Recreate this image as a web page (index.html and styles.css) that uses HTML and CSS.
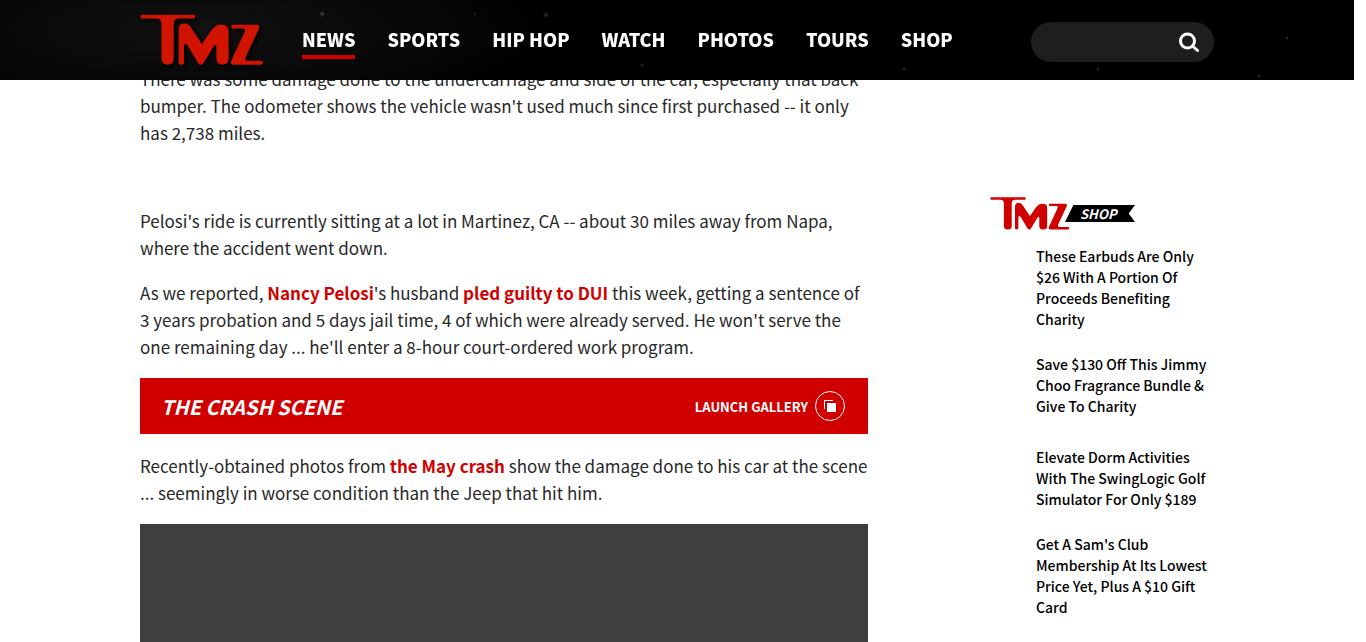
FILE: index.html
```html
<!DOCTYPE html>
<html lang="en">
<head>
<meta charset="utf-8">
<title>TMZ</title>
<link rel="stylesheet" href="styles.css">
</head>
<body>
<svg class="symbols" aria-hidden="true">
  <symbol id="tmz" viewBox="60 40 375 154">
    <path d="M64 41H224Q227 41 227 46.500Q227 52 224 52H180Q162 52 162 68V174Q162 192 143.500 192Q125 192 125 174V68Q125 52 108 52H64Q62 50 62 46.500Q62 42 64 41Z"/>
    <path d="M177 185V84Q177 67 195 67Q207 67 214 79L247 129L277 86Q290 71 302 71H312Q328 73 328 90V174Q328 192 309.500 192Q291 192 291 174V139Q291 126 283 136L252 187Q244 197 236 187L205 135Q193 120 193 139V185Q193 192 185 192Q177 192 177 185Z"/>
    <path d="M340 71H415Q424 73 420 82L379 170Q376 179 384 180H427Q432 182 432 186Q431 191 427 192H342Q332 190 336 180L377 91Q380 83 372 82H340Q336 81 336 76Q336 72 340 71Z"/>
  </symbol>
</svg>
<header class="header">
  <div class="header-inner">
    <a class="logo" href="#" aria-label="TMZ"><svg><use href="#tmz"/></svg></a>
    <nav class="nav">
      <a class="active" href="#">NEWS</a>
      <a href="#">SPORTS</a>
      <a href="#">HIP HOP</a>
      <a href="#">WATCH</a>
      <a href="#">PHOTOS</a>
      <a href="#">TOURS</a>
      <a href="#">SHOP</a>
    </nav>
    <form class="search">
      <input type="text" aria-label="Search">
      <button type="button" aria-label="Submit search">
        <svg viewBox="0 0 20 20"><circle cx="8.500" cy="9" r="7"/><path d="M13.500 14L18.500 18.500"/></svg>
      </button>
    </form>
  </div>
</header>
<main class="page">
  <article class="article">
    <p class="lead">There was some damage done to the undercarriage and side of the car, especially that back bumper. The odometer shows the vehicle wasn't used much since first purchased -- it only<br>has 2,738 miles.</p>
    <p>Pelosi's ride is currently sitting at a lot in Martinez, CA -- about 30 miles away from Napa,<br>where the accident went down.</p>
    <p>As we reported, <a href="#">Nancy Pelosi</a>'s husband <a href="#">pled guilty to DUI</a> this week, getting a sentence of<br>3 years probation and 5 days jail time, 4 of which were already served. He won't serve the<br>one remaining day ... he'll enter a 8-hour court-ordered work program.</p>
    <a class="gallery" href="#">
      <span class="gallery-title">THE CRASH SCENE</span>
      <span class="gallery-launch">LAUNCH GALLERY
        <svg viewBox="0 0 30 30"><circle cx="15" cy="15" r="14.500"/><path d="M9 18V9H18V10H10V18Z"/><path d="M12 12H21V21H12Z"/></svg>
      </span>
    </a>
    <p>Recently-obtained photos from <a href="#">the May crash</a> show the damage done to his car at the scene<br>... seemingly in worse condition than the Jeep that hit him.</p>
    <div class="media"></div>
  </article>
  <aside class="shop">
    <a class="shop-logo" href="#"><svg><use href="#tmz"/></svg><span>SHOP</span></a>
    <ul class="deals">
      <li><a href="#">These Earbuds Are Only $26 With A Portion Of Proceeds Benefiting Charity</a></li>
      <li><a href="#">Save $130 Off This Jimmy Choo Fragrance Bundle &amp; Give To Charity</a></li>
      <li><a href="#">Elevate Dorm Activities With The SwingLogic Golf Simulator For Only $189</a></li>
      <li><a href="#">Get A Sam's Club Membership At Its Lowest Price Yet, Plus A $10 Gift Card</a></li>
    </ul>
  </aside>
</main>
</body>
</html>
```
FILE: styles.css
```css
* { box-sizing: border-box; }
body {
  margin: 0;
  padding-right: 12px;
  background: #fff;
  color: #282828;
  font-family: "Noto Sans CJK SC", "Noto Sans", sans-serif;
}
a { color: inherit; text-decoration: none; }
.symbols { position: absolute; width: 0; height: 0; }

.header {
  position: fixed;
  top: 0;
  left: 0;
  right: 12px;
  z-index: 2;
  height: 80px;
  background:
    radial-gradient(circle at 322px 14px, #444 0, transparent 3px),
    radial-gradient(circle at 475px 14px, #222 0, transparent 2px),
    radial-gradient(circle at 546px 15px, #333 0, transparent 3px),
    radial-gradient(circle at 642px 65px, #333 0, transparent 2px),
    radial-gradient(circle at 904px 69px, #333 0, transparent 2px),
    radial-gradient(circle at 1098px 69px, #333 0, transparent 2px),
    radial-gradient(circle at 1287px 38px, #333 0, transparent 2px),
    radial-gradient(circle at 1259px 76px, #333 0, transparent 2px),
    radial-gradient(ellipse 360px 90px at 200px 30px, #121212 0, #000 100%);
}
.header-inner {
  display: flex;
  align-items: center;
  max-width: 1074px;
  height: 100%;
  margin: 0 auto;
}
.logo { flex: none; margin-right: 38px; filter: drop-shadow(2px 2px 2px #000); }
.logo svg { display: block; width: 124px; height: 52px; fill: #d01400; }
.nav { display: flex; gap: 32px; padding-top: 2px; }
.nav a {
  border-bottom: 4px solid transparent;
  color: #fff;
  font-size: 18px;
  font-weight: 900;
  line-height: 32px;
  white-space: nowrap;
}
.nav .active { border-color: #d00000; }
.search {
  display: flex;
  flex: none;
  align-items: center;
  width: 183px;
  height: 40px;
  margin: 4px 0 0 auto;
  padding-right: 15px;
  border-radius: 20px;
  background: #1e1e1e;
}
.search input { flex: 1; min-width: 0; padding-left: 16px; border: 0; outline: 0; background: none; color: #fff; }
.search button { padding: 0; border: 0; background: none; }
.search svg { display: block; width: 20px; height: 20px; fill: none; stroke: #fff; stroke-width: 3; stroke-linecap: round; }

.page {
  display: flex;
  justify-content: space-between;
  max-width: 1074px;
  min-height: 100vh;
  margin: 0 auto;
  padding-top: 65px;
}
.article { display: flex; flex-direction: column; width: 728px; font-size: 17px; line-height: 27px; }
.article p { margin: 0 0 18px; }
.article .lead { margin-bottom: 61px; }
.article p a { color: #d00000; font-weight: bold; }
.gallery {
  display: flex;
  align-items: center;
  justify-content: space-between;
  height: 56px;
  margin-bottom: 18px;
  padding: 0 23px 0 21px;
  background: #d00000;
  color: #fff;
  font-weight: bold;
}
.gallery-title { font-size: 20px; font-style: italic; }
.gallery-launch { display: flex; align-items: center; gap: 7px; font-size: 13px; }
.gallery svg { width: 30px; height: 30px; fill: #fff; }
.gallery circle { fill: none; stroke: #fff; }
.media { flex: 1; background: #3f3f3f; }

.shop { width: 224px; padding-top: 132px; }
.shop-logo { display: flex; align-items: center; }
.shop-logo svg { width: 80px; height: 33px; fill: #d00000; }
.shop-logo span {
  width: 70px;
  margin-left: -5px;
  padding-left: 15px;
  background: #000;
  clip-path: polygon(12% 0, 100% 0, 91% 50%, 100% 100%, 0 100%);
  color: #fff;
  font: italic bold 13px/17px "Noto Sans CJK SC", sans-serif;
}
.deals {
  display: flex;
  flex-direction: column;
  gap: 18px;
  margin: 0;
  padding: 16px 0 0 46px;
  list-style: none;
  color: #000;
  font-size: 14px;
  font-weight: 500;
  line-height: 21px;
}
.deals li { display: flex; align-items: center; min-height: 75px; }
```
